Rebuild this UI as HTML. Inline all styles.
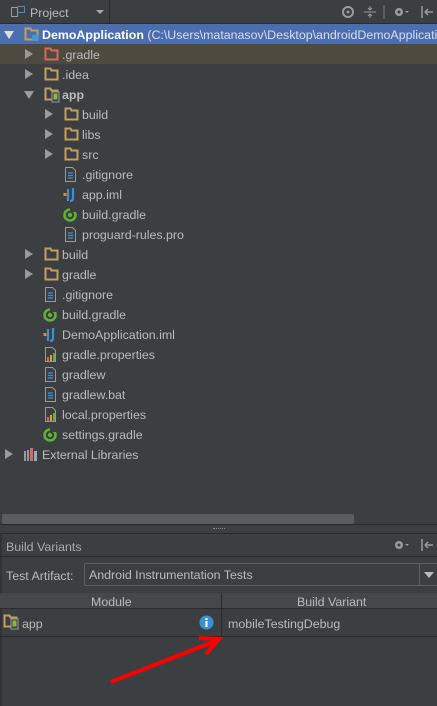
<!DOCTYPE html>
<html><head><meta charset="utf-8"><style>
*{margin:0;padding:0;box-sizing:border-box}
body{width:437px;height:706px;background:#3c3f41;font-family:"Liberation Sans",sans-serif;font-size:12.4px;color:#bbbbbb;position:relative;overflow:hidden}
.a{position:absolute}
.row{position:absolute;left:0;width:437px;height:20px}
.t{position:absolute;top:4px;white-space:nowrap}
.ar{position:absolute;top:5px;width:0;height:0}
.ar.r{border-left:8px solid #9a9a9a;border-top:5px solid transparent;border-bottom:5px solid transparent}
.ar.d{top:7px;border-top:8px solid #9a9a9a;border-left:5px solid transparent;border-right:5px solid transparent}
.ic{position:absolute;top:3px}
</style></head><body>
<svg width="0" height="0" style="position:absolute">
<defs>
<g id="fold"><path d="M1.5 3.5V1.5h5l1 2h6v9h-12z" fill="none" stroke="#c59d5f" stroke-width="2"/></g>
<g id="foldr"><path d="M1.5 3.5V1.5h5l1 2h6v9h-12z" fill="none" stroke="#d46a5e" stroke-width="2"/></g>
<g id="mod"><path d="M1.5 3.5V1.5h5l1 2h6v9h-12z" fill="none" stroke="#c59d5f" stroke-width="2"/><rect x="8" y="5" width="7" height="10" fill="#3c3f41" stroke="#9a9a9a"/><rect x="9.5" y="6.5" width="4" height="6" fill="#8cb83a"/></g>
<g id="txt"><path d="M2.5 0.5h7l3 3v11h-10z" fill="none" stroke="#9a9a9a"/><path d="M5 6h5M5 8.5h5M5 11h5" stroke="#3d8fd1" stroke-width="1.3"/></g>
<g id="iml"><rect x="0.5" y="6" width="3" height="3" fill="#e08a2e"/><path d="M5 2v12M10 1v10q0 3-3 3" fill="none" stroke="#3d8fd1" stroke-width="2.2"/></g>
<g id="gr"><circle cx="7" cy="8" r="5.5" fill="none" stroke="#5fb038" stroke-width="2.6"/><circle cx="7" cy="8" r="2.2" fill="#5fb038"/><rect x="7" y="1" width="6" height="4" fill="#3c3f41"/></g>
<g id="prop"><path d="M2.5 0.5h7l3 3v11h-10z" fill="none" stroke="#9a9a9a"/><rect x="4" y="10" width="2" height="4" fill="#e0604f"/><rect x="7" y="8" width="2" height="6" fill="#e0a32e"/><rect x="10" y="6" width="2" height="8" fill="#5fb038"/></g>
<g id="lib"><rect x="1" y="4" width="2" height="10" fill="#9a9a9a"/><rect x="4" y="3" width="2" height="11" fill="#9a9a9a"/><rect x="7" y="1" width="3" height="13" fill="#d46a6a"/><rect x="11" y="4" width="3" height="10" fill="#9ab"/></g>
</defs></svg>

<div class="a" style="left:0;top:0;width:437px;height:24px;background:#3c3f41;border-bottom:1px solid #2b2b2b"></div>
<div class="a" style="left:0;top:0;width:110px;height:23px;border-right:1px solid #2b2b2b"></div>
<svg class="a" style="left:10px;top:5px" width="16" height="14"><rect x="1.5" y="2.5" width="6" height="9" fill="none" stroke="#9a9a9a"/><path d="M7.5 1.5h7v6h-7" fill="none" stroke="#3d8fd1"/></svg>
<div class="a" style="left:30px;top:6px">Project</div>
<div class="a" style="left:96px;top:10px;border-top:4px solid #aaa;border-left:4px solid transparent;border-right:4px solid transparent"></div>
<svg class="a" style="left:340px;top:5px" width="97" height="14">
<circle cx="8" cy="7" r="5" fill="none" stroke="#9a9a9a" stroke-width="2"/><circle cx="8" cy="7" r="1.5" fill="#9a9a9a"/>
<path d="M24 7h12M30 1v4M30 9v4M28 3l2 2 2-2M28 11l2-2 2 2" stroke="#9a9a9a" fill="none"/>
<path d="M44 0v14" stroke="#777"/>
<circle cx="59" cy="7" r="4" fill="#9a9a9a"/><circle cx="59" cy="7" r="1.5" fill="#3c3f41"/><path d="M65 6h4l-2 2z" fill="#9a9a9a"/>
<path d="M82 1v12M85 7h8M85 7l3-3M85 7l3 3" stroke="#9a9a9a" fill="none" stroke-width="1.5"/>
</svg>

<div class="row" style="top:24px;background:#4b6eaf"></div>
<div class="row" style="top:44px;background:#4f4a3f"></div>

<div class="row" style="top:24px"><div class="ar d" style="left:4px;border-top-color:#ddd"></div><svg class="ic" style="left:24px" width="16" height="16"><use href="#fold"/><rect x="8" y="8" width="7" height="5" rx="1" fill="#3d9bd8"/></svg><div class="t" style="left:42px;color:#fff"><b>DemoApplication</b> <span style="color:#dde">(C:\Users\matanasov\Desktop\androidDemoApplication</span></div></div>

<div class="row" style="top:44px"><div class="ar r" style="left:25px"></div><svg class="ic" style="left:44px" width="16" height="16"><use href="#foldr"/></svg><div class="t" style="left:62px">.gradle</div></div>
<div class="row" style="top:64px"><div class="ar r" style="left:25px"></div><svg class="ic" style="left:44px" width="16" height="16"><use href="#fold"/></svg><div class="t" style="left:62px">.idea</div></div>
<div class="row" style="top:84px"><div class="ar d" style="left:24px"></div><svg class="ic" style="left:44px" width="16" height="16"><use href="#mod"/></svg><div class="t" style="left:62px"><b>app</b></div></div>
<div class="row" style="top:104px"><div class="ar r" style="left:45px"></div><svg class="ic" style="left:64px" width="16" height="16"><use href="#fold"/></svg><div class="t" style="left:82px">build</div></div>
<div class="row" style="top:124px"><div class="ar r" style="left:45px"></div><svg class="ic" style="left:64px" width="16" height="16"><use href="#fold"/></svg><div class="t" style="left:82px">libs</div></div>
<div class="row" style="top:144px"><div class="ar r" style="left:45px"></div><svg class="ic" style="left:64px" width="16" height="16"><use href="#fold"/></svg><div class="t" style="left:82px">src</div></div>
<div class="row" style="top:164px"><svg class="ic" style="left:63px" width="16" height="16"><use href="#txt"/></svg><div class="t" style="left:82px">.gitignore</div></div>
<div class="row" style="top:184px"><svg class="ic" style="left:63px" width="16" height="16"><use href="#iml"/></svg><div class="t" style="left:82px">app.iml</div></div>
<div class="row" style="top:204px"><svg class="ic" style="left:63px" width="16" height="16"><use href="#gr"/></svg><div class="t" style="left:82px">build.gradle</div></div>
<div class="row" style="top:224px"><svg class="ic" style="left:63px" width="16" height="16"><use href="#txt"/></svg><div class="t" style="left:82px">proguard-rules.pro</div></div>
<div class="row" style="top:244px"><div class="ar r" style="left:25px"></div><svg class="ic" style="left:44px" width="16" height="16"><use href="#fold"/></svg><div class="t" style="left:62px">build</div></div>
<div class="row" style="top:264px"><div class="ar r" style="left:25px"></div><svg class="ic" style="left:44px" width="16" height="16"><use href="#fold"/></svg><div class="t" style="left:62px">gradle</div></div>
<div class="row" style="top:284px"><svg class="ic" style="left:43px" width="16" height="16"><use href="#txt"/></svg><div class="t" style="left:62px">.gitignore</div></div>
<div class="row" style="top:304px"><svg class="ic" style="left:43px" width="16" height="16"><use href="#gr"/></svg><div class="t" style="left:62px">build.gradle</div></div>
<div class="row" style="top:324px"><svg class="ic" style="left:43px" width="16" height="16"><use href="#iml"/></svg><div class="t" style="left:62px">DemoApplication.iml</div></div>
<div class="row" style="top:344px"><svg class="ic" style="left:43px" width="16" height="16"><use href="#prop"/></svg><div class="t" style="left:62px">gradle.properties</div></div>
<div class="row" style="top:364px"><svg class="ic" style="left:43px" width="16" height="16"><use href="#txt"/></svg><div class="t" style="left:62px">gradlew</div></div>
<div class="row" style="top:384px"><svg class="ic" style="left:43px" width="16" height="16"><use href="#txt"/></svg><div class="t" style="left:62px">gradlew.bat</div></div>
<div class="row" style="top:404px"><svg class="ic" style="left:43px" width="16" height="16"><use href="#prop"/></svg><div class="t" style="left:62px">local.properties</div></div>
<div class="row" style="top:424px"><svg class="ic" style="left:43px" width="16" height="16"><use href="#gr"/></svg><div class="t" style="left:62px">settings.gradle</div></div>
<div class="row" style="top:444px"><div class="ar r" style="left:5px"></div><svg class="ic" style="left:23px" width="16" height="16"><use href="#lib"/></svg><div class="t" style="left:42px">External Libraries</div></div>

<div class="a" style="left:2px;top:514px;width:352px;height:10px;background:#5a5c5e;border-radius:2px"></div>
<div class="a" style="left:0;top:524px;width:437px;height:1px;background:#2b2b2b"></div>
<div class="a" style="left:213px;top:528px;width:12px;height:1px;border-top:1px dotted #888"></div>
<div class="a" style="left:0;top:533px;width:437px;height:1px;background:#2b2b2b"></div>

<div class="a" style="left:0;top:533px;width:2px;height:173px;background:#333"></div>
<div class="a" style="left:6px;top:540px;color:#aaa">Build Variants</div>
<svg class="a" style="left:392px;top:538px" width="45" height="14"><circle cx="7" cy="7" r="4" fill="#9a9a9a"/><circle cx="7" cy="7" r="1.5" fill="#3c3f41"/><path d="M13 6h4l-2 2z" fill="#9a9a9a"/><path d="M30 1v12M33 7h8M33 7l3-3M33 7l3 3" stroke="#9a9a9a" fill="none" stroke-width="1.5"/></svg>
<div class="a" style="left:0;top:556px;width:437px;height:1px;background:#2b2b2b"></div>
<div class="a" style="left:6px;top:569px">Test Artifact:</div>
<div class="a" style="left:84px;top:563px;width:360px;height:23px;border:1px solid #5e6060;border-radius:2px;background:#3c3f41"></div>
<div class="a" style="left:89px;top:568px">Android Instrumentation Tests</div>
<div class="a" style="left:419px;top:563px;width:1px;height:23px;background:#5e6060"></div>
<div class="a" style="left:424px;top:572px;border-top:6px solid #bbb;border-left:5px solid transparent;border-right:5px solid transparent"></div>
<div class="a" style="left:0;top:593px;width:437px;height:16px;background:#45484a;border-bottom:1px solid #2b2b2b"></div>
<div class="a" style="left:221px;top:593px;width:1px;height:44px;background:#2b2b2b"></div>
<div class="a" style="left:91px;top:595px">Module</div>
<div class="a" style="left:297px;top:595px">Build Variant</div>
<svg class="a" style="left:3px;top:614px" width="16" height="16"><use href="#mod"/></svg>
<div class="a" style="left:22px;top:617px">app</div>
<svg class="a" style="left:199px;top:615px" width="15" height="15"><circle cx="7.5" cy="7.5" r="7" fill="#3d8fd1"/><rect x="6.5" y="6" width="2" height="6" fill="#fff"/><rect x="6.5" y="3" width="2" height="2" fill="#fff"/></svg>
<div class="a" style="left:228px;top:617px">mobileTestingDebug</div>
<div class="a" style="left:0;top:636px;width:437px;height:1px;background:#2b2b2b"></div>
<svg class="a" style="left:0;top:630px" width="240" height="60"><path d="M111 52L218 10M199 8L219 9L206 24" stroke="#ff0000" stroke-width="4" fill="none"/></svg>
</body></html>
